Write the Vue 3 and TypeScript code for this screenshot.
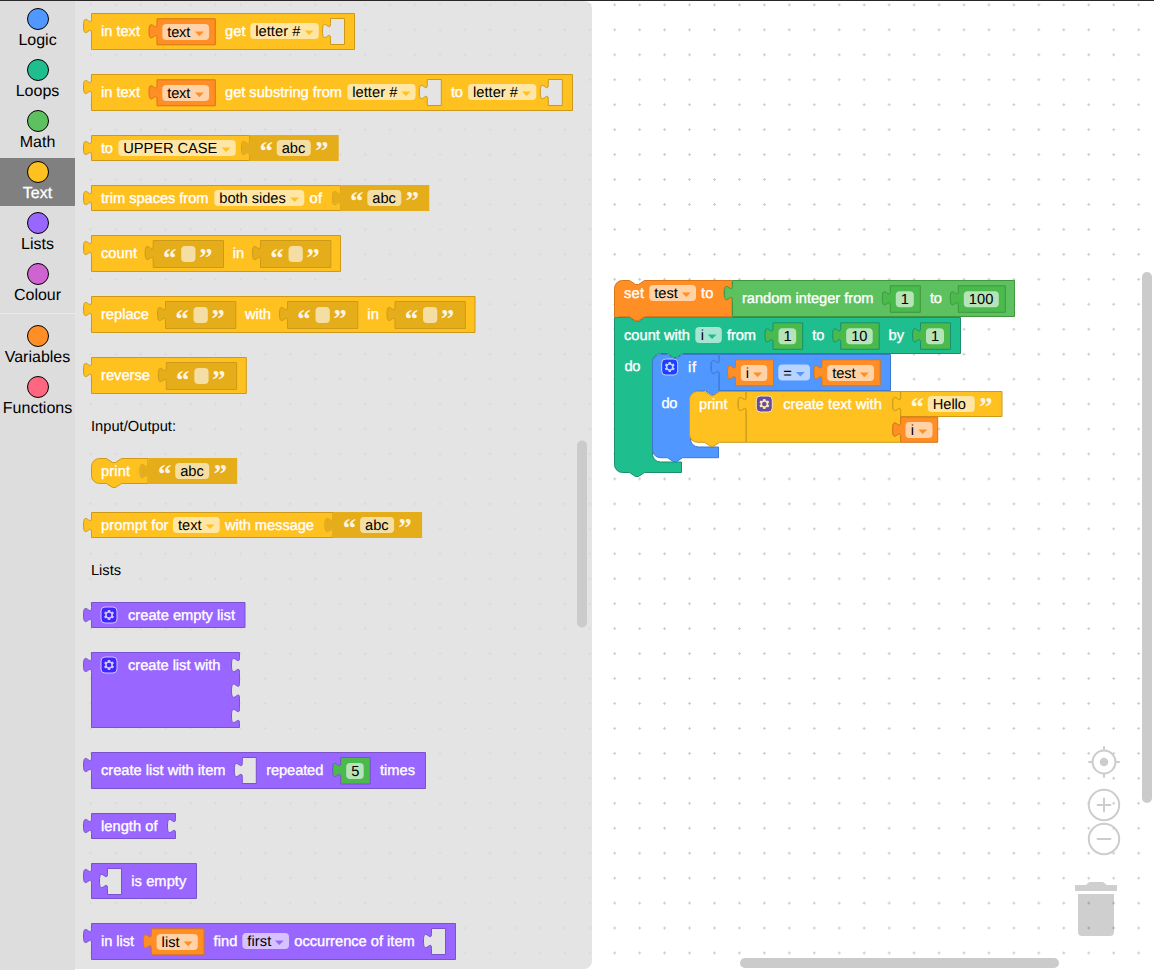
<script setup lang="ts">
interface Category { name: string; colour: string; selected?: boolean }

interface Shape { kind: 'shape'; d: string; fill: string; stroke: string }
interface Label { kind: 'label'; x: number; y: number; w: number; text: string; tone: string }
interface Pill { kind: 'pill'; x: number; y: number; w: number }
interface Arrow { kind: 'arrow'; x: number; y: number; fill: string }
interface Quote { kind: 'quote'; x: number; y: number; text: string }
interface Gear { kind: 'gear'; x: number; y: number }
type Item = Shape | Label | Pill | Arrow | Quote | Gear

interface Paint { fill: string; stroke: string; shadow: string }

const logic: Paint = { fill: '#5097ff', stroke: '#3d78d0', shadow: '#5097ff' }
const loops: Paint = { fill: '#1ebe8f', stroke: '#188f6d', shadow: '#1ebe8f' }
const math: Paint = { fill: '#5dc15f', stroke: '#3f963f', shadow: '#4aba4c' }
const text: Paint = { fill: '#ffc11f', stroke: '#cc9a18', shadow: '#e6ad1a' }
const lists: Paint = { fill: '#9966ff', stroke: '#7a52cc', shadow: '#9966ff' }
const vars: Paint = { fill: '#ff8e24', stroke: '#d97418', shadow: '#ff8e24' }
const backdrop = '#e4e4e4'

const main: Category[] = [
  { name: 'Logic', colour: '#5097ff' },
  { name: 'Loops', colour: '#1ebe8f' },
  { name: 'Math', colour: '#5dc15f' },
  { name: 'Text', colour: '#ffc11f', selected: true },
  { name: 'Lists', colour: '#9966ff' },
  { name: 'Colour', colour: '#cf63cf' },
]
const extra: Category[] = [
  { name: 'Variables', colour: '#ff8e24' },
  { name: 'Functions', colour: '#ff6680' },
]

const tabDown = 'c0,10 -8,-8 -8,7.5 s8,-2.5 8,7.5'
const tabUp = 'c0,-10 -8,8 -8,-7.5 s8,2.5 8,-7.5'
const notchRight = 'l6,4 3,0 6,-4'
const notchLeft = 'l-6,4 -3,0 -6,-4'

/* Right edge, drawn downwards, with a socket at each given offset from the top. */
function rightEdge(top: number, bottom: number, sockets: number[]): string {
  return sockets.map((s) => `V${top + s + 5}${tabDown}`).join('') + `V${bottom}`
}

function valueBlock(x: number, y: number, r: number, b: number, fill: string, stroke: string, sockets: number[] = []): Shape {
  return { kind: 'shape', fill, stroke, d: `M${x},${y}H${r}${rightEdge(y, b, sockets)}H${x}V${y + 20}${tabUp}Z` }
}

function stackBlock(x: number, y: number, r: number, b: number, p: Paint, round = true): Shape {
  const start = round ? `M${x},${y + 8}a8,8 0 0,1 8,-8` : `M${x},${y}`
  const end = round ? `H${x + 8}a8,8 0 0,1 -8,-8Z` : `H${x}Z`
  return { kind: 'shape', fill: p.fill, stroke: p.stroke, d: `${start}H${x + 15}${notchRight}H${r}${rightEdge(y, b, [0])}H${x + 30}${notchLeft}${end}` }
}

function loopBlock(x: number, y: number, r: number, mid: number, inner: number, arm: number, b: number, p: Paint, round: boolean, socket: boolean): Shape {
  const start = round ? `M${x},${y + 8}a8,8 0 0,1 8,-8` : `M${x},${y}`
  const d = `${start}H${x + 15}${notchRight}H${r}${rightEdge(y, mid, socket ? [0] : [])}H${x + 68}${notchLeft}H${x + 46}a8,8 0 0,0 -8,8V${inner - 8}a8,8 0 0,0 8,8H${arm}V${b}H${x + 30}${notchLeft}H${x + 8}a8,8 0 0,1 -8,-8Z`
  return { kind: 'shape', fill: p.fill, stroke: p.stroke, d }
}

function label(x: number, y: number, w: number, value: string, tone = 'light'): Label {
  return { kind: 'label', x, y, w, text: value, tone }
}

function input(x: number, y: number, w: number, tx: number, tw: number, value: string): Item[] {
  const items: Item[] = [{ kind: 'pill', x, y, w }]
  if (value) items.push(label(tx, y + 13, tw, value, 'dark'))
  return items
}

function dropdown(x: number, y: number, w: number, tx: number, tw: number, value: string, p: Paint): Item[] {
  return [...input(x, y, w, tx, tw, value), { kind: 'arrow', x: x + w - 9.7, y: y + 7.5, fill: p.fill }]
}

function hole(x: number, y: number, p: Paint): Shape {
  return valueBlock(x, y, x + 14, y + 26, backdrop, p.stroke)
}

function variable(x: number, y: number, w: number, tw: number, name: string): Item[] {
  return [valueBlock(x, y, x + w, y + 26, vars.fill, vars.stroke), ...dropdown(x + 5.3, y + 5.3, w - 11.5, x + 10.3, tw, name, vars)]
}

function emptyText(x: number, y: number): Item[] {
  return [
    valueBlock(x, y, x + 70.3, y + 27, text.shadow, text.stroke),
    { kind: 'quote', x: x + 9.7, y, text: '“' },
    { kind: 'pill', x: x + 28, y: y + 5.5, w: 14.3 },
    { kind: 'quote', x: x + 45.7, y, text: '”' },
  ]
}

function abc(x: number, y: number): Item[] {
  return [
    valueBlock(x, y - 0.5, x + 89, y + 25.5, text.shadow, 'none'),
    { kind: 'quote', x: x + 9.7, y: y - 1.5, text: '“' },
    ...input(x + 27, y + 4.5, 34, x + 32, 23.6, 'abc'),
    { kind: 'quote', x: x + 65.2, y: y - 1.5, text: '”' },
  ]
}

function num(x: number, y: number, w: number, tw: number, value: string, p: Paint): Item[] {
  return [valueBlock(x, y, x + w, y + 26.5, math.shadow, p.stroke), ...input(x + 5.5, y + 5.5, w - 12, x + 10.5, tw, value)]
}

const flyout: Item[] = [
  valueBlock(91.5, 13.5, 354.5, 49.5, text.fill, text.stroke),
  label(101, 36, 39, 'in text'), ...variable(157, 18.8, 58.3, 23, 'text'),
  label(225, 36, 20.5, 'get'), ...dropdown(250.3, 23, 68.5, 255.3, 45, 'letter #', text), hole(330.5, 18.5, text),

  valueBlock(91.5, 74.5, 572.5, 110.5, text.fill, text.stroke),
  label(101, 97, 39, 'in text'), ...variable(157, 79.8, 58.3, 23, 'text'),
  label(225, 97, 117, 'get substring from'), ...dropdown(347.3, 84, 68.3, 352.3, 45, 'letter #', text), hole(427.3, 79.5, text),
  label(451, 97, 12, 'to'), ...dropdown(468, 84, 68.3, 473, 45, 'letter #', text), hole(548.3, 79.5, text),

  valueBlock(91.5, 135.5, 249.5, 160.5, text.fill, text.stroke, [0]),
  label(101, 153, 12, 'to'), ...dropdown(118.3, 140, 117.5, 123.3, 94, 'UPPER CASE', text), ...abc(249.7, 135.5),

  valueBlock(91.5, 185.5, 340.5, 210.5, text.fill, text.stroke, [0]),
  label(101, 203, 107.5, 'trim spaces from'), ...dropdown(214.3, 190, 90, 219.3, 66.5, 'both sides', text),
  label(309.5, 203, 12.5, 'of'), ...abc(340.3, 185.5),

  valueBlock(91.5, 235.5, 340.5, 271.5, text.fill, text.stroke),
  label(101, 258, 36, 'count'), ...emptyText(153.2, 240.5), label(232.7, 258, 11.5, 'in'), ...emptyText(260.5, 240.5),

  valueBlock(91.5, 296.5, 475, 332.5, text.fill, text.stroke),
  label(101, 319, 48, 'replace'), ...emptyText(165.5, 301.5), label(245, 319, 26, 'with'), ...emptyText(287.5, 301.5),
  label(367.3, 319, 11.5, 'in'), ...emptyText(395, 301.5),

  valueBlock(91.5, 357.5, 246.3, 393.5, text.fill, text.stroke),
  label(101, 380, 49, 'reverse'), ...emptyText(166.3, 362.5),

  label(91, 431, 85, 'Input/Output:', 'dark'),

  stackBlock(91.5, 458.5, 148, 483.5, text),
  label(101, 476, 29, 'print'), ...abc(148.2, 458.5),

  valueBlock(91.5, 512.5, 333, 537.5, text.fill, text.stroke, [0]),
  label(101, 530, 67.5, 'prompt for'), ...dropdown(173, 517, 46.7, 178, 23.5, 'text', text),
  label(225, 530, 89, 'with message'), ...abc(333.1, 512.5),

  label(91, 575, 30, 'Lists', 'dark'),

  valueBlock(91.5, 602.5, 245, 627.5, lists.fill, lists.stroke),
  { kind: 'gear', x: 101, y: 607 }, label(128, 620, 107, 'create empty list'),

  valueBlock(91.5, 652.5, 239.5, 727.5, lists.fill, lists.stroke, [0, 25.7, 51]),
  { kind: 'gear', x: 101, y: 657 }, label(128, 670, 92.5, 'create list with'),

  valueBlock(91.5, 752.5, 425.5, 788.5, lists.fill, lists.stroke),
  label(101, 775, 124.5, 'create list with item'), hole(242.3, 757.5, lists), label(266.3, 775, 57, 'repeated'),
  ...num(340.7, 757.5, 29.5, 8, '5', lists), label(380, 775, 35, 'times'),

  valueBlock(91.5, 813.5, 175.5, 838.5, lists.fill, lists.stroke, [0]),
  label(101, 831, 56.5, 'length of'),

  valueBlock(91.5, 863.5, 196.5, 898.5, lists.fill, lists.stroke),
  hole(107.5, 868.5, lists), label(131.3, 886, 55, 'is empty'),

  valueBlock(91.5, 923.5, 455.5, 959.5, lists.fill, lists.stroke),
  label(101, 946, 33, 'in list'), ...variable(151.3, 928.8, 52.7, 18, 'list'),
  label(213.5, 946, 24, 'find'), ...dropdown(242.3, 933, 46.7, 247.3, 24, 'first', lists),
  label(294.3, 946, 120.5, 'occurrence of item'), hole(431.5, 928.5, lists),
]

const program: Item[] = [
  loopBlock(614.5, 317.5, 960.5, 353.5, 462, 681.5, 472.5, loops, false, false),
  stackBlock(614.5, 280.5, 732, 316.8, vars),
  { kind: 'shape', fill: vars.fill, stroke: 'none', d: 'M615,300H640V316.3H615Z' },
  { kind: 'shape', fill: 'none', stroke: vars.stroke, d: 'M614.5,300V316.8H629.5l6,4 3,0 6,-4H732' },
  label(624, 298, 20, 'set'), ...dropdown(649.3, 285, 46.7, 654.3, 23.5, 'test', vars), label(701, 298, 12.5, 'to'),
  valueBlock(732.5, 280.5, 1014.5, 316.5, math.fill, math.stroke),
  label(742, 303, 131.5, 'random integer from'), ...num(890.3, 285.8, 30, 8, '1', math),
  label(930, 303, 12, 'to'), ...num(958.3, 285.8, 47, 24.5, '100', math),

  label(624, 340, 66, 'count with'), ...dropdown(695.3, 327, 26.5, 700.7, 3.3, 'i', loops), label(727, 340, 29, 'from'),
  ...num(773, 322.8, 29.7, 8, '1', loops), label(812.3, 340, 12, 'to'), ...num(840.7, 322.8, 38.5, 16.3, '10', loops),
  label(888.5, 340, 15.5, 'by'), ...num(920.5, 322.8, 30, 8, '1', loops),
  label(624.5, 371, 16, 'do'),

  loopBlock(652.5, 354.5, 719, 390.8, 447, 718.5, 457.7, logic, true, true),
  { kind: 'gear', x: 661.7, y: 359 }, label(688, 372, 8, 'if'),
  valueBlock(719.3, 354.5, 890.5, 390.5, logic.fill, logic.stroke),
  ...variable(735.5, 359.8, 38, 3.3, 'i'), ...dropdown(778.3, 364.5, 31.7, 783.3, 8.6, '=', logic),
  ...variable(821.9, 359.8, 58.3, 23.5, 'test'),
  label(661.5, 408, 16, 'do'),

  stackBlock(689.5, 391.5, 746, 442.3, text),
  label(699, 409, 28.5, 'print'),
  valueBlock(746.3, 391.5, 900.5, 442.3, text.fill, text.stroke, [0, 25.6]),
  { kind: 'gear', x: 756.3, y: 396 }, label(783.3, 409, 98.5, 'create text with'),
  valueBlock(900.7, 391.5, 1002, 416.5, text.fill, text.stroke),
  { kind: 'quote', x: 910.5, y: 390, text: '“' }, ...input(927.7, 396, 47, 932.7, 33.3, 'Hello'), { kind: 'quote', x: 979, y: 390, text: '”' },
  valueBlock(900.7, 417, 937.7, 442.3, vars.fill, vars.stroke), ...dropdown(905.5, 422, 27, 910.7, 3.3, 'i', vars),
]

const gearPath = 'm4.203,7.296 0,1.368 -0.92,0.677 -0.11,0.41 0.9,1.479 0.41,0.11 1.043,-0.457 1.187,0.683 0.127,1.134 0.3,0.3 1.8,0 0.3,-0.299 0.127,-1.138 1.185,-0.682 1.046,0.458 0.409,-0.11 0.9,-1.479 -0.11,-0.41 -0.92,-0.677 0,-1.366 0.92,-0.677 0.11,-0.41 -0.9,-1.479 -0.409,-0.109 -1.046,0.458 -1.185,-0.682 -0.127,-1.138 -0.3,-0.299 -1.8,0 -0.3,0.3 -0.127,1.134 -1.187,0.683 -1.043,-0.457 -0.41,0.11 -0.9,1.479 0.11,0.41z'

const layers = [
  { name: 'program', items: program },
  { name: 'flyout', items: flyout },
]
</script>

<template>
  <div class="editor">
    <svg class="canvas" width="1154" height="970" viewBox="0 0 1154 970">
      <defs>
        <pattern id="grid" x="3.4" y="-7.6" width="24.95" height="24.95" patternUnits="userSpaceOnUse">
          <path d="M11,12.45h3M12.5,10.95v3" stroke="#cccccc" stroke-width="1" />
        </pattern>
      </defs>
      <rect width="1154" height="970" fill="url(#grid)" />

      <g v-for="layer in layers" :key="layer.name">
        <path v-if="layer.name === 'flyout'" d="M75,1H584a8,8 0 0,1 8,8V961a8,8 0 0,1 -8,8H75Z" fill="#dddddd" fill-opacity="0.8" />
        <template v-for="(item, i) in layer.items" :key="i">
          <path v-if="item.kind === 'shape'" :d="item.d" :fill="item.fill" :stroke="item.stroke" />
          <rect v-else-if="item.kind === 'pill'" class="pill" :x="item.x" :y="item.y" :width="item.w" height="16" rx="4" />
          <path v-else-if="item.kind === 'arrow'" :d="`M${item.x - 4.4},${item.y}h8.8l-4.4,4.6z`" :fill="item.fill" />
          <text v-else-if="item.kind === 'quote'" class="quote" :x="item.x" :y="item.y + 26.3">{{ item.text }}</text>
          <g v-else-if="item.kind === 'gear'" class="gear" :transform="`translate(${item.x},${item.y})`">
            <rect class="gear-box" width="16" height="16" rx="4" />
            <path class="gear-teeth" :d="gearPath" />
            <circle class="gear-core" cx="8" cy="8" r="2.3" />
          </g>
          <text v-else-if="item.kind === 'label'" :class="['label', item.tone]" :x="item.x" :y="item.y" :textLength="item.w">{{ item.text }}</text>
        </template>
      </g>

      <rect class="bar" x="577" y="440.5" width="10" height="187" rx="5" />
      <rect class="bar" x="1142" y="272" width="10" height="531" rx="5" />
      <rect class="bar" x="740" y="958" width="319" height="10" rx="5" />

      <g class="control">
        <circle cx="1104" cy="762" r="11.5" />
        <path d="M1088.3,762h4M1115.8,762h4M1104,746.2v4M1104,773.8v4" />
        <circle class="solid" cx="1104" cy="762" r="4.3" />
        <circle cx="1104" cy="805" r="15.2" />
        <path d="M1096.8,805h14.4M1104,797.8v14.4" />
        <circle cx="1104" cy="839" r="15.2" />
        <path d="M1096.8,839h14.4" />
      </g>
      <path class="trash" d="M1075,885H1086l2,-2q1,-1 2.500,-1H1102q1.500,0 2.500,1l2,2H1117V891H1075ZM1078,894H1114V932a4,4 0 0,1 -4,4H1082a4,4 0 0,1 -4,-4Z" />
    </svg>

    <nav class="toolbox">
      <div v-for="c in main" :key="c.name" :class="['category', { selected: c.selected }]">
        <span class="dot" :style="{ background: c.colour }"></span>
        <span class="name">{{ c.name }}</span>
      </div>
      <div class="separator"></div>
      <div v-for="c in extra" :key="c.name" class="category">
        <span class="dot" :style="{ background: c.colour }"></span>
        <span class="name">{{ c.name }}</span>
      </div>
    </nav>
    <div class="edge"></div>
  </div>
</template>

<style>
html,
body {
  margin: 0;
  overflow: hidden;
  background: #fff;
}
</style>

<style scoped>
.editor {
  position: relative;
  display: flex;
  width: 1154px;
  height: 970px;
  overflow: hidden;
  background: #fff;
  font-family: 'Liberation Sans', Arial, Helvetica, sans-serif;
  text-rendering: geometricPrecision;
}
.canvas {
  position: absolute;
  inset: 0;
}
.edge {
  position: absolute;
  inset: 0 0 auto 0;
  height: 1px;
  background: #2a262a;
}
.toolbox {
  position: relative;
  box-sizing: border-box;
  width: 75px;
  height: 970px;
  padding-top: 5px;
  background: #ddd;
}
.category {
  box-sizing: border-box;
  display: flex;
  flex-direction: column;
  align-items: center;
  height: 48px;
  margin-bottom: 3px;
  padding-top: 3px;
  color: #000;
}
.selected {
  background: #808080;
  color: #fff;
  -webkit-text-stroke: 0.3px #fff;
}
.dot {
  box-sizing: border-box;
  width: 22px;
  height: 22px;
  margin-left: 1px;
  border: 1px solid #000;
  border-radius: 50%;
}
.name {
  margin-top: 1px;
  font-size: 16px;
  line-height: 20px;
  white-space: nowrap;
}
.separator {
  height: 1px;
  margin: 5px 0;
  border-bottom: 3px solid transparent;
  background: #ebebeb;
  background-clip: padding-box;
}
.label {
  font-size: 14.67px;
}
.light {
  fill: #fff;
  stroke: #fff;
  stroke-width: 0.35px;
}
.dark {
  fill: #000;
}
.pill {
  fill: #fff;
  fill-opacity: 0.6;
}
.quote {
  fill: #fff;
  fill-opacity: 0.9;
  font-family: 'Liberation Serif', 'Times New Roman', serif;
  font-size: 27px;
  font-weight: bold;
}
.gear {
  opacity: 0.6;
}
.gear-box {
  fill: #00f;
  stroke: #fff;
}
.gear-teeth {
  fill: #fff;
}
.gear-core {
  fill: #00f;
}
.bar {
  fill: #cbcbcb;
}
.control {
  fill: none;
  stroke: #cdcdcd;
  stroke-width: 2px;
}
.solid {
  fill: #cdcdcd;
  stroke: none;
}
.trash {
  fill: #000;
  fill-opacity: 0.19;
}
</style>
